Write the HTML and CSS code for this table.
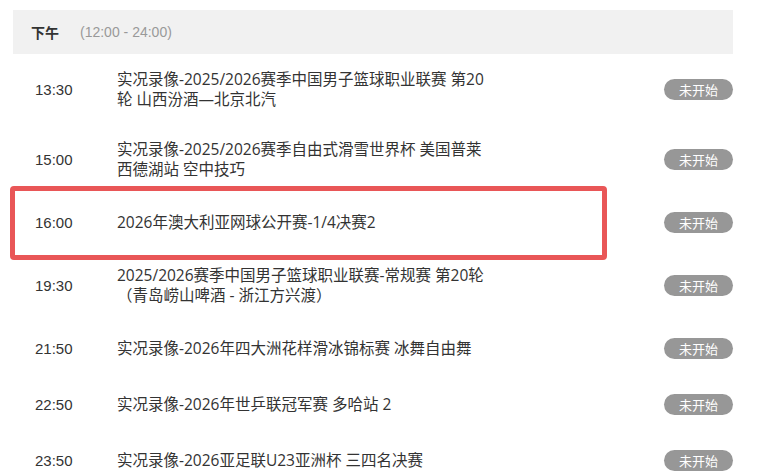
FILE: index.html
```html
<!DOCTYPE html>
<html lang="zh-CN">
<head>
    <meta charset="UTF-8">
    <meta name="viewport" content="width=device-width, initial-scale=1.0">
    <title>节目单 - 下午</title>
    <link rel="stylesheet" href="styles.css">
</head>
<body>
    <div class="schedule">
        <div class="period">
            <span class="period-name">下午</span>
            <span class="period-range">(12:00 - 24:00)</span>
        </div>
        <ul class="list">
            <li class="item">
                <span class="time">13:30</span>
                <span class="title">实况录像-2025/2026赛季中国男子篮球职业联赛 第20轮 山西汾酒—北京北汽</span>
                <span class="status">未开始</span>
            </li>
            <li class="item">
                <span class="time">15:00</span>
                <span class="title">实况录像-2025/2026赛季自由式滑雪世界杯 美国普莱西德湖站 空中技巧</span>
                <span class="status">未开始</span>
            </li>
            <li class="item marked">
                <span class="time">16:00</span>
                <span class="title">2026年澳大利亚网球公开赛-1/4决赛2</span>
                <span class="status">未开始</span>
            </li>
            <li class="item">
                <span class="time">19:30</span>
                <span class="title">2025/2026赛季中国男子篮球职业联赛-常规赛 第20轮（青岛崂山啤酒 - 浙江方兴渡）</span>
                <span class="status">未开始</span>
            </li>
            <li class="item">
                <span class="time">21:50</span>
                <span class="title">实况录像-2026年四大洲花样滑冰锦标赛 冰舞自由舞</span>
                <span class="status">未开始</span>
            </li>
            <li class="item">
                <span class="time">22:50</span>
                <span class="title">实况录像-2026年世乒联冠军赛 多哈站 2</span>
                <span class="status">未开始</span>
            </li>
            <li class="item">
                <span class="time">23:50</span>
                <span class="title">实况录像-2026亚足联U23亚洲杯 三四名决赛</span>
                <span class="status">未开始</span>
            </li>
        </ul>
    </div>
</body>
</html>
```

FILE: styles.css
```css
body {
    margin: 0;
    background: #fff;
    font-family: "Liberation Sans", "Noto Sans CJK SC", sans-serif;
    color: #333;
}
.schedule {
    width: 720px;
    margin: 10px 0 0 13px;
}
.period {
    display: flex;
    align-items: center;
    height: 44px;
    padding-left: 18px;
    background: #f1f1f1;
    font-size: 14px;
}
.period-name {
    font-family: "Noto Sans CJK SC", sans-serif;
    font-weight: bold;
    color: #333;
    width: 49px;
}
.period-range {
    color: #999;
}
.list {
    list-style: none;
    margin: 0;
    padding: 0;
}
.item {
    display: flex;
    align-items: center;
    min-height: 56px;
    padding: 15px 0 15px 22px;
    box-sizing: border-box;
}
.time {
    width: 82px;
    flex: none;
    font-size: 15px;
    color: #333;
}
.title {
    width: 374px;
    font-family: "Open Sans", "Noto Sans CJK SC", sans-serif;
    font-size: 15.5px;
    line-height: 20px;
    color: #333;
}
.status {
    margin-left: auto;
    width: 69px;
    height: 21px;
    line-height: 21px;
    border-radius: 11px;
    background: #979797;
    color: #fff;
    text-align: center;
    font-family: "Noto Sans CJK SC", sans-serif;
    font-size: 13px;
}
.marked {
    position: relative;
}
.marked::after {
    content: "";
    position: absolute;
    left: -3px;
    top: -8px;
    right: 126px;
    bottom: -10px;
    border: 5px solid #e95657;
    border-radius: 4px;
}
```
